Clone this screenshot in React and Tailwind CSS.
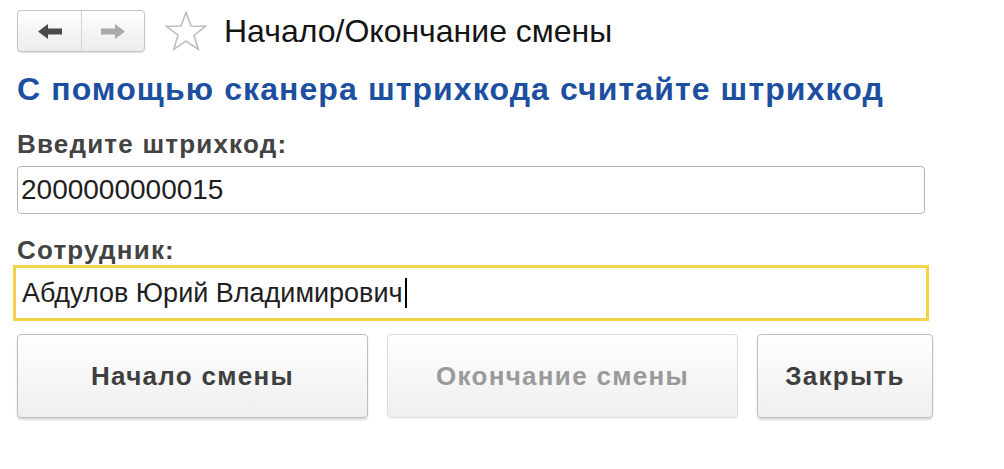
import React from 'react';

function NavArrows() {
  return (
    <div className="flex h-[42px] w-[128px] rounded-[4px] border border-[#c4c4c4] bg-gradient-to-b from-white to-[#ececec] shadow-[0_1px_1px_rgba(0,0,0,0.12)]">
      <div className="flex w-[64px] items-center justify-center border-r border-[#d4d4d4]">
        <svg width="24" height="15" viewBox="0 0 24 15">
          <path d="M0 7.5 L10 0 L10 4.5 L24 4.5 L24 10.5 L10 10.5 L10 15 Z" fill="#4a4a4a" />
        </svg>
      </div>
      <div className="flex flex-1 items-center justify-center">
        <svg width="24" height="15" viewBox="0 0 24 15">
          <path d="M24 7.5 L14 0 L14 4.5 L0 4.5 L0 10.5 L14 10.5 L14 15 Z" fill="#a9a9a9" />
        </svg>
      </div>
    </div>
  );
}

function Star() {
  return (
    <svg width="42" height="40" viewBox="0 0 42 40">
      <path
        d="M21 1.5 L26 15 L40.5 15.3 L29 24.2 L33.2 38.3 L21 30 L8.8 38.3 L13 24.2 L1.5 15.3 L16 15 Z"
        fill="white"
        stroke="#bdbdbd"
        strokeWidth="1.6"
      />
    </svg>
  );
}

function Button({ children, disabled, className }) {
  return (
    <div
      className={
        'flex h-[84px] items-center justify-center rounded-[4px] border bg-gradient-to-b from-white to-[#efefef] text-[26px] font-bold tracking-[1.3px] ' +
        (disabled
          ? 'border-[#dcdcdc] text-[#9a9a9a] shadow-[0_1px_2px_rgba(0,0,0,0.06)] '
          : 'border-[#bdbdbd] text-[#3f3f3f] shadow-[0_2px_2px_rgba(0,0,0,0.15)] ') +
        className
      }
    >
      {children}
    </div>
  );
}

export default function App() {
  return (
    <div className="h-[469px] w-[1004px] bg-white font-['Liberation_Sans',Arial,sans-serif]">
      <div className="flex items-center pl-[17px] pt-[10px]">
        <NavArrows />
        <div className="ml-[20px]">
          <Star />
        </div>
        <div className="ml-[17px] text-[32px] leading-none text-[#141414]">Начало/Окончание смены</div>
      </div>

      <div className="pl-[17px] pt-[21px] text-[32px] font-bold leading-none tracking-[1.1px] text-[#1d4fa0]">
        С помощью сканера штрихкода считайте штрихкод
      </div>

      <div className="pl-[17px] pt-[26px] text-[26px] font-bold leading-none tracking-[1.2px] text-[#434343]">
        Введите штрихкод:
      </div>
      <div className="ml-[17px] mt-[9px] flex h-[48px] w-[908px] items-center rounded-[4px] border border-[#b7b7b7] pl-[3px] text-[28px] text-[#1e1e1e]">
        2000000000015
      </div>

      <div className="pl-[17px] pt-[23px] text-[26px] font-bold leading-none tracking-[1.2px] text-[#434343]">
        Сотрудник:
      </div>
      <div className="ml-[13px] mt-[2px] flex h-[56px] w-[916px] items-center border-[3px] border-[#f2d44a] pl-[6px] text-[27px] text-[#1e1e1e]">
        Абдулов Юрий Владимирович
        <span className="ml-[2px] inline-block h-[30px] w-[2px] bg-black" />
      </div>

      <div className="flex gap-[19px] pl-[17px] pt-[13px]">
        <Button className="w-[351px]">Начало смены</Button>
        <Button className="w-[351px]" disabled>
          Окончание смены
        </Button>
        <Button className="w-[176px]">Закрыть</Button>
      </div>
    </div>
  );
}
